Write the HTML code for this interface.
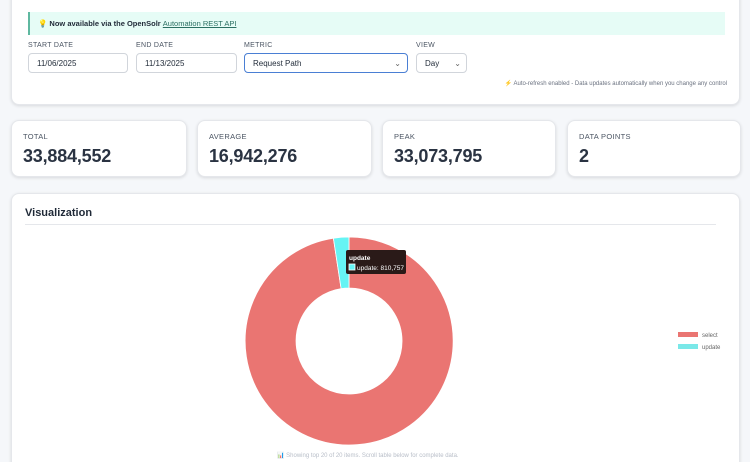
<!DOCTYPE html><html><head><meta charset="utf-8"><style>
html,body{margin:0;width:750px;height:462px;overflow:hidden}
body{background:#f5f7fa;font-family:"Liberation Sans",sans-serif;position:relative;color:#1f2937}
.card{position:absolute;background:#fff;border-radius:8px;box-shadow:0 1px 3px rgba(0,0,0,.12);border:1px solid #e5e7eb}
.lbl{position:absolute;font-size:7px;color:#4b5563;letter-spacing:.3px}
.inp{position:absolute;height:20px;border:1px solid #d1d5db;border-radius:4px;font-size:8px;line-height:20px;padding-left:8px;box-sizing:border-box;background:#fff}
.st .t{position:absolute;left:11px;top:11px;font-size:7.5px;color:#4b5563;letter-spacing:.3px}
.st .v{position:absolute;left:11px;top:25px;font-size:18px;font-weight:bold;color:#2a3342;letter-spacing:-.2px}
</style></head><body>
<div class="card" style="left:11px;top:-10px;width:727px;height:113px">
<div style="position:absolute;left:650px;top:4px;width:62px;height:4px;background:#4caf7d;border-radius:2px"></div>
<div style="position:absolute;left:16px;top:21px;width:697px;height:23px;background:#e6fcf6;border-left:2px solid #5fb8a0;font-size:7.5px;line-height:23px;padding-left:8px;box-sizing:border-box;font-weight:bold"><span style="color:#f4c542">💡</span> Now available via the OpenSolr <span style="color:#2b6f62;text-decoration:underline;font-weight:normal">Automation REST API</span></div>
<div class="lbl" style="left:16px;top:51px">START DATE</div>
<div class="lbl" style="left:124px;top:51px">END DATE</div>
<div class="lbl" style="left:232px;top:51px">METRIC</div>
<div class="lbl" style="left:404px;top:51px">VIEW</div>
<div class="inp" style="left:16px;top:62px;width:100px">11/06/2025</div>
<div class="inp" style="left:124px;top:62px;width:101px">11/13/2025</div>
<div class="inp" style="left:232px;top:62px;width:164px;border-color:#4a7fd4;border-width:1.5px">Request Path<span style="position:absolute;right:6px;color:#666">⌄</span></div>
<div class="inp" style="left:404px;top:62px;width:51px">Day<span style="position:absolute;right:5px;color:#666">⌄</span></div>
<div style="position:absolute;right:12px;top:89px;font-size:6px;color:#6b7280"><span style="color:#f4c542">⚡</span> Auto-refresh enabled - Data updates automatically when you change any control</div>
</div>
<div class="card st" style="left:11px;top:120px;width:174px;height:55px"><div class="t">TOTAL</div><div class="v">33,884,552</div></div>
<div class="card st" style="left:197px;top:120px;width:173px;height:55px"><div class="t">AVERAGE</div><div class="v">16,942,276</div></div>
<div class="card st" style="left:382px;top:120px;width:172px;height:55px"><div class="t">PEAK</div><div class="v">33,073,795</div></div>
<div class="card st" style="left:567px;top:120px;width:172px;height:55px"><div class="t">DATA POINTS</div><div class="v">2</div></div>
<div class="card" style="left:11px;top:193px;width:727px;height:290px">
<div style="position:absolute;left:13px;top:13px;font-size:11px;font-weight:bold">Visualization</div>
<div style="position:absolute;left:13px;top:30px;width:691px;height:1px;background:#e5e7eb"></div>
<div style="position:absolute;left:265px;top:258px;font-size:6px;color:#b8bec8">📊 Showing top 20 of 20 items. Scroll table below for complete data.</div>
</div>
<svg style="position:absolute;left:0;top:0" width="750" height="462">
<path d="M349 237 A104 104 0 1 1 333.4 238.2 L341.1 288.6 A53 53 0 1 0 349 288 Z" fill="#ea7572" stroke="#fff" stroke-width=".8"/>
<path d="M333.4 238.2 A104 104 0 0 1 349 237 L349 288 A53 53 0 0 0 341.1 288.6 Z" fill="#66f4f4" stroke="#fff" stroke-width=".8"/>
<rect x="346" y="250" width="60" height="24" rx="2" fill="#2a1a18"/>
<text x="349" y="260" font-size="6.5" font-weight="bold" fill="#fff" font-family="Liberation Sans">update</text>
<rect x="349" y="264" width="6" height="6" fill="#66f4f4" stroke="#fff" stroke-width=".8"/>
<text x="357" y="270" font-size="6.5" fill="#fff" font-family="Liberation Sans">update: 810,757</text>
<rect x="678" y="332" width="20" height="5" fill="#ea7572"/>
<text x="702" y="337" font-size="6" fill="#666" font-family="Liberation Sans">select</text>
<rect x="678" y="344" width="20" height="5" fill="#7ae8e8"/>
<text x="702" y="349" font-size="6" fill="#666" font-family="Liberation Sans">update</text>
</svg>
</body></html>
